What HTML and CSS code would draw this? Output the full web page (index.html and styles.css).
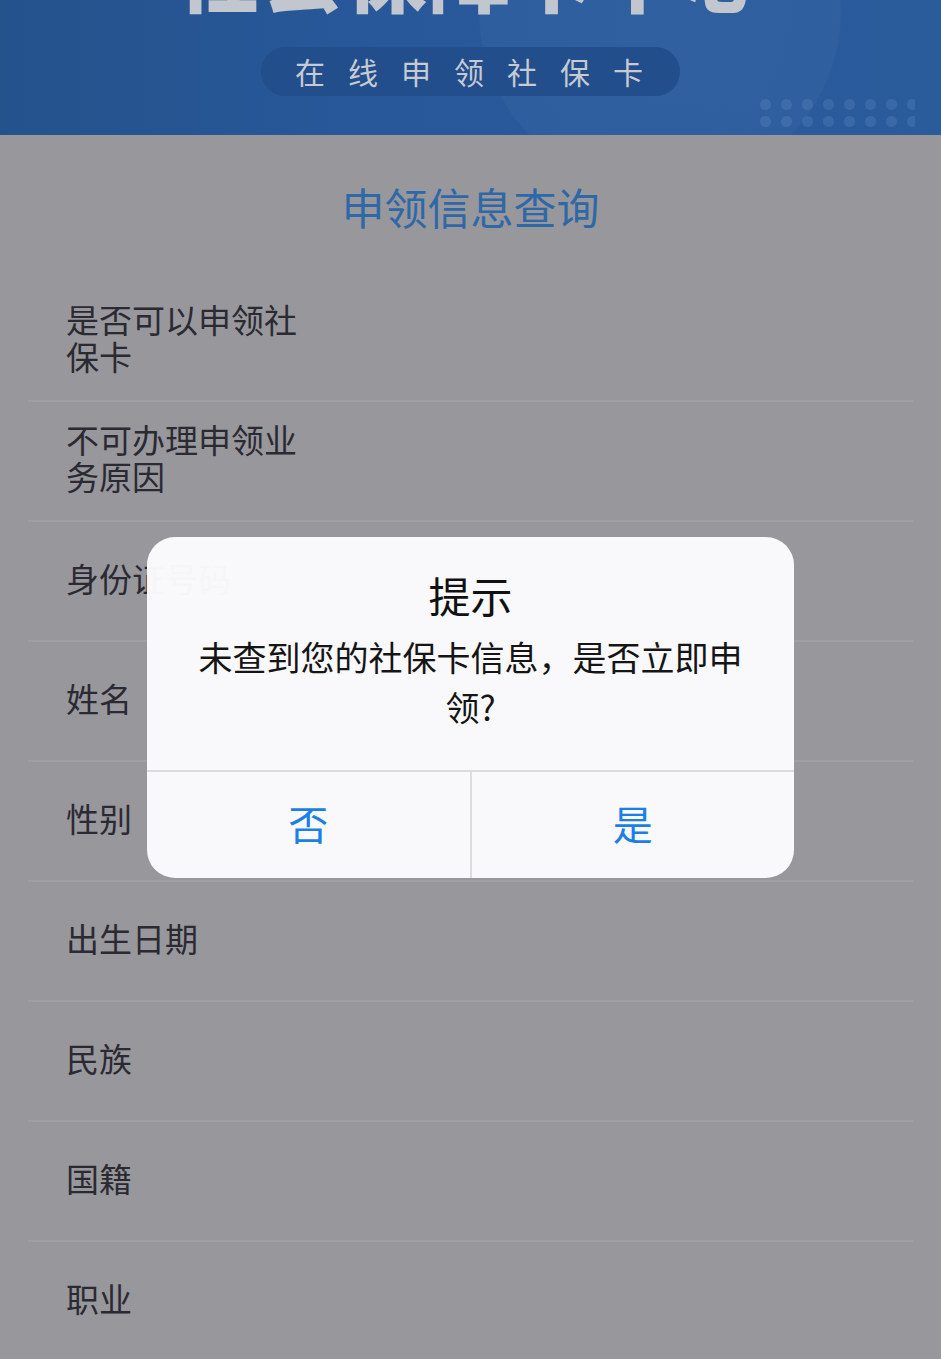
FILE: index.html
```html
<!DOCTYPE html>
<html lang="zh-CN">
<head>
<meta charset="utf-8">
<title>申领信息查询</title>
<link rel="stylesheet" href="styles.css">
</head>
<body>
<div class="page">
  <header class="banner">
    <div class="big-title">社会保障卡中心</div>
    <div class="pill">在线申领社保卡</div>
    <div class="dots"></div>
  </header>
  <h1 class="title">申领信息查询</h1>
  <ul class="list">
    <li class="row"><span class="label">是否可以申领社保卡</span></li>
    <li class="row"><span class="label">不可办理申领业务原因</span></li>
    <li class="row"><span class="label">身份证号码</span></li>
    <li class="row"><span class="label">姓名</span></li>
    <li class="row"><span class="label">性别</span></li>
    <li class="row"><span class="label">出生日期</span></li>
    <li class="row"><span class="label">民族</span></li>
    <li class="row"><span class="label">国籍</span></li>
    <li class="row"><span class="label">职业</span></li>
  </ul>
</div>
<div class="dialog">
  <div class="dialog-body">
    <div class="dialog-title">提示</div>
    <div class="dialog-msg">未查到您的社保卡信息，是否立即申领?</div>
  </div>
  <div class="dialog-actions">
    <button class="btn">否</button>
    <button class="btn">是</button>
  </div>
</div>
</body>
</html>
```
FILE: styles.css
```css
* { box-sizing: border-box; }
html, body {
  margin: 0;
  padding: 0;
  background: #98979b;
  font-family: "Noto Sans CJK SC", "Noto Sans", sans-serif;
}
body { position: relative; min-height: 1359px; overflow: hidden; }
.page { width: 941px; }

.banner {
  position: relative;
  height: 135px;
  overflow: hidden;
  display: flex;
  flex-direction: column;
  align-items: center;
  background:
    radial-gradient(circle at 660px 10px, rgba(80,125,180,0.18) 0, rgba(80,125,180,0.14) 180px, rgba(80,125,180,0) 182px),
    linear-gradient(90deg, #24528b 0%, #28589a 40%, #2a5b9b 100%);
}
.big-title {
  font-size: 82px;
  font-weight: 900;
  line-height: 82px;
  margin-top: -70px;
  color: #c2c6ce;
  letter-spacing: 2px;
}
.pill {
  margin-top: 35px;
  height: 49px;
  padding: 0 14px 0 34px;
  border-radius: 25px;
  background: #224e8c;
  color: #c5cad3;
  font-size: 30px;
  line-height: 49px;
  letter-spacing: 23px;
}
.dots {
  position: absolute;
  right: 26px;
  top: 96px;
  width: 160px;
  height: 34px;
  background-image: radial-gradient(circle, rgba(100,140,195,0.28) 5px, transparent 6px);
  background-size: 21px 17px;
}

.title {
  margin: 0;
  padding-top: 47px;
  text-align: center;
  font-size: 43px;
  line-height: 48px;
  font-weight: 400;
  color: #2f68a6;
}

.list {
  list-style: none;
  margin: 52px 0 0;
  padding: 0;
}
.row {
  height: 120px;
  margin: 0 28px;
  padding-left: 38px;
  display: flex;
  align-items: center;
  border-bottom: 2px solid #a09fa3;
}
.label {
  width: 240px;
  margin-top: -6px;
  font-size: 33px;
  line-height: 37px;
  color: #2b2a33;
}

.dialog {
  position: absolute;
  top: 537px;
  left: 147px;
  width: 647px;
  height: 341px;
  border-radius: 28px;
  background: rgba(251, 251, 253, 0.975);
  overflow: hidden;
  display: flex;
  flex-direction: column;
}
.dialog-body {
  height: 235px;
  padding: 34px 50px 0;
  text-align: center;
  border-bottom: 2px solid #dcdcdf;
}
.dialog-title {
  font-size: 42px;
  line-height: 48px;
  color: #111;
}
.dialog-msg {
  margin-top: 13px;
  font-size: 34px;
  line-height: 50px;
  color: #151515;
}
.dialog-actions {
  flex: 1;
  display: flex;
}
.btn {
  flex: 1;
  border: 0;
  background: transparent;
  font-family: inherit;
  font-size: 40px;
  color: #1b7fe3;
  padding: 0 0 4px;
}
.btn + .btn { border-left: 2px solid #dcdcdf; }
```
